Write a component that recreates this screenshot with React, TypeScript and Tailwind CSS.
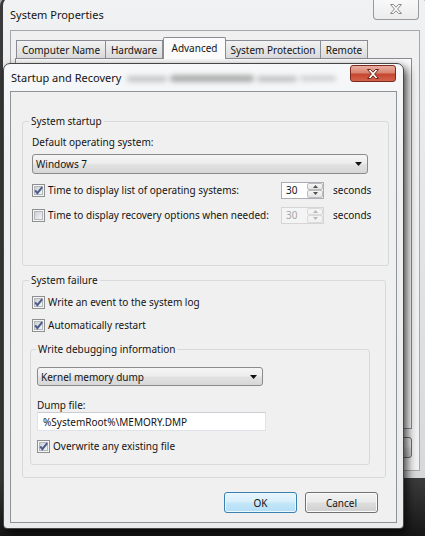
import React from "react";

function XGlyph({ fill, stroke, className }: { fill: string; stroke: string; className: string }) {
  return (
    <svg viewBox="0 0 14 10" className={className}>
      <path
        d="M1.5 0.5H4.5L7 3.2L9.5 0.5H12.5L8.6 5L12.5 9.5H9.5L7 6.8L4.5 9.5H1.5L5.4 5Z"
        fill={fill}
        stroke={stroke}
        strokeWidth="1"
        strokeLinejoin="round"
      />
    </svg>
  );
}

function CheckBox({ checked }: { checked: boolean }) {
  return (
    <span className="relative flex h-[13px] w-[13px] shrink-0 items-center justify-center border border-[#8e8f8f] bg-[#f4f4f4]">
      <span className="h-[9px] w-[9px] border border-[#b3b7bd] bg-[linear-gradient(135deg,#cbcfd5,#f6f6f6)]" />
      {checked && (
        <svg viewBox="0 0 13 13" className="absolute left-[-1px] top-[-1px] h-[13px] w-[13px]">
          <path d="M3.2 6.4L5.4 9.2L10.2 3.2" fill="none" stroke="#4a5d8a" strokeWidth="2" />
        </svg>
      )}
    </span>
  );
}

function Combo({ text, size }: { text: string; size: string }) {
  return (
    <div
      className={`flex items-center justify-between rounded-[3px] border border-[#8b8b8b] bg-[linear-gradient(180deg,#f5f5f5,#ededed_45%,#e1e1e1_55%,#d7d7d7)] pl-[3px] pr-[5px] ${size}`}
    >
      <span>{text}</span>
      <svg viewBox="0 0 7 4" className="h-[4px] w-[7px]">
        <path d="M0 0H7L3.5 4Z" fill="#111" />
      </svg>
    </div>
  );
}

function SpinBtn({ up, disabled }: { up: boolean; disabled: boolean }) {
  return (
    <div
      className={
        disabled
          ? "flex flex-1 items-center justify-center rounded-[2px] border border-[#dadada] bg-[#f3f3f3]"
          : "flex flex-1 items-center justify-center rounded-[2px] border border-[#bdbdbd] bg-[linear-gradient(180deg,#f6f6f6,#e3e3e3)]"
      }
    >
      <svg viewBox="0 0 5 3" className="h-[3px] w-[5px]">
        <path d={up ? "M0 3H5L2.5 0Z" : "M0 0H5L2.5 3Z"} fill={disabled ? "#b8b8b8" : "#505050"} />
      </svg>
    </div>
  );
}

function Spin({ disabled }: { disabled: boolean }) {
  return (
    <div
      className={
        disabled
          ? "flex h-[17px] w-[43px] border border-[#d5d5d5] bg-[#f4f4f4]"
          : "flex h-[17px] w-[43px] border border-[#abadb3] bg-white"
      }
    >
      <span className={disabled ? "flex-1 pl-[4px] leading-[15px] text-[#a6a6a6]" : "flex-1 pl-[4px] leading-[15px]"}>30</span>
      <div className="flex w-[16px] flex-col">
        <SpinBtn up={true} disabled={disabled} />
        <SpinBtn up={false} disabled={disabled} />
      </div>
    </div>
  );
}

function Tab({ label, size, selected }: { label: string; size: string; selected?: boolean }) {
  return (
    <div
      className={
        selected
          ? `relative z-10 mb-[-1px] flex h-[22px] items-start justify-center rounded-t-[2px] border border-b-0 border-[#898c95] bg-[#fbfbfb] pt-[3px] ${size}`
          : `flex h-[18px] items-center justify-center border border-b-0 border-l-0 border-[#898c95] bg-[linear-gradient(180deg,#f2f2f2,#e6e6e6_50%,#dadada)] ${size}`
      }
    >
      {label}
    </div>
  );
}

export default function App() {
  return (
    <div className="relative h-[536px] w-[425px] overflow-hidden bg-[linear-gradient(180deg,#a8a8a8_0%,#8a8a8a_55%,#4a4a4a_85%,#161616_100%)] font-['Noto_Sans',sans-serif] text-[10px] leading-[14px] text-[#141414]">
      {/* Background window: System Properties */}
      <div className="absolute left-0 top-[-3px] flex w-[428px] flex-col rounded-t-[9px] border border-l-[3px] border-[#3a3a3a] bg-[linear-gradient(180deg,#f1f2f3,#e4e6e8_40%,#d6d8da)] pb-[7px] pl-[7px] pr-[7px]">
        <div className="h-[32px] pt-[10px] text-[11px] leading-[14px]">System Properties</div>
        <div className="absolute right-[8px] top-0 flex h-[22px] w-[46px] items-center justify-center rounded-b-[4px] border border-t-0 border-[#9a9a9a] bg-[linear-gradient(180deg,#fafafa,#ececec)]">
          <XGlyph fill="#f7f7f7" stroke="#8c8c8c" className="h-[10px] w-[14px]" />
        </div>
        <div className="flex flex-col border border-[#a7a7a7] bg-[#f0f0f0] pb-[12px] pl-[4px] pr-[7px] pt-[6px]">
          <div className="flex h-[21px] items-end pl-[1px]">
            <div className="h-[18px] w-0 border-l border-[#898c95]" />
            <Tab label="Computer Name" size="w-[89px]" />
            <Tab label="Hardware" size="w-[57px]" />
            <Tab label="Advanced" size="w-[63px]" selected />
            <Tab label="System Protection" size="w-[95px]" />
            <Tab label="Remote" size="w-[47px]" />
          </div>
          <div className="h-[371px] border border-[#898c95] bg-[#fbfbfb]" />
          <div className="mt-[8px] flex justify-end gap-[6px]">
            <button className="h-[21px] w-[75px] rounded-[3px] border border-[#707070] bg-[linear-gradient(180deg,#f2f2f2,#ebebeb_45%,#dddddd_55%,#cfcfcf)]">OK</button>
            <button className="h-[21px] w-[75px] rounded-[3px] border border-[#707070] bg-[linear-gradient(180deg,#f2f2f2,#ebebeb_45%,#dddddd_55%,#cfcfcf)]">Cancel</button>
            <button className="h-[21px] w-[75px] rounded-[3px] border border-[#707070] bg-[linear-gradient(180deg,#f2f2f2,#ebebeb_45%,#dddddd_55%,#cfcfcf)]">Apply</button>
          </div>
        </div>
      </div>

      {/* Foreground dialog: Startup and Recovery */}
      <div className="absolute left-[3px] top-[63px] flex w-[401px] flex-col rounded-b-[4px] rounded-t-[7px] border border-[#474747] bg-[linear-gradient(180deg,#f7f8f9,#eef0f2_20%,#e9ebed)] px-[6px] pb-[5px] shadow-[3px_4px_10px_rgba(0,0,0,0.75)]">
        <div className="flex h-[27px] items-start pl-[1px] pt-[7px]">
          <span className="shrink-0 text-[11px] leading-[14px]">Startup and Recovery</span>
          {/* glass blur of the window behind */}
          <div className="ml-[6px] mt-[3px] flex h-[9px] items-center gap-[3px] blur-[2.5px]">
            <div className="h-[6px] w-[40px] rounded-full bg-[#c6c6c6]" />
            <div className="h-[7px] w-[84px] rounded-full bg-[#acacac]" />
            <div className="h-[6px] w-[40px] rounded-full bg-[#c2c2c2]" />
            <div className="h-[5px] w-[36px] rounded-full bg-[#cdcdcd]" />
          </div>
        </div>
        <div className="absolute right-[7px] top-[1px] flex h-[17px] w-[46px] items-center justify-center rounded-[3px] border border-[#7d2a1e] bg-[linear-gradient(180deg,#eab0a3,#d98570_45%,#c7452f_55%,#d2644c)]">
          <XGlyph fill="#ffffff" stroke="#6d2419" className="h-[10px] w-[14px]" />
        </div>

        <div className="flex flex-col border border-[#8f9296] bg-[#f0f0f0] pb-[9px] pt-[22px]">
          {/* System startup */}
          <fieldset className="ml-[11px] mr-[10px] rounded-[3px] border border-[#d7d9db]">
            <legend className="ml-[6px] h-[14px] px-[2px] leading-[14px]">System startup</legend>
            <div className="flex flex-col pb-[41px] pl-[9px] pr-[17px] pt-[7px]">
              <div className="h-[14px]">Default operating system:</div>
              <Combo text="Windows 7" size="mt-[5px] h-[20px] w-[336px]" />
              <div className="mt-[7px] flex h-[18px] items-center">
                <CheckBox checked={true} />
                <span className="ml-[3px] w-[233px]">Time to display list of operating systems:</span>
                <Spin disabled={false} />
                <span className="ml-[9px]">seconds</span>
              </div>
              <div className="mt-[7px] flex h-[18px] items-center">
                <CheckBox checked={false} />
                <span className="ml-[3px] w-[233px]">Time to display recovery options when needed:</span>
                <Spin disabled={true} />
                <span className="ml-[9px]">seconds</span>
              </div>
            </div>
          </fieldset>

          {/* System failure */}
          <fieldset className="ml-[11px] mr-[10px] mt-[7px] rounded-[3px] border border-[#d7d9db]">
            <legend className="ml-[6px] h-[14px] px-[2px] leading-[14px]">System failure</legend>
            <div className="flex flex-col pb-[12px] pl-[7px] pr-[15px] pt-[7px]">
              <div className="ml-[2px] flex h-[16px] items-center">
                <CheckBox checked={true} />
                <span className="ml-[3px]">Write an event to the system log</span>
              </div>
              <div className="ml-[2px] mt-[7px] flex h-[16px] items-center">
                <CheckBox checked={true} />
                <span className="ml-[3px]">Automatically restart</span>
              </div>

              <fieldset className="mt-[9px] rounded-[3px] border border-[#d7d9db]">
                <legend className="ml-[5px] h-[14px] px-[2px] leading-[14px]">Write debugging information</legend>
                <div className="flex flex-col pb-[10px] pl-[6px] pt-[11px]">
                  <Combo text="Kernel memory dump" size="h-[19px] w-[226px]" />
                  <div className="mt-[12px] h-[14px]">Dump file:</div>
                  <div className="flex h-[19px] w-[229px] items-center border border-[#dfe2e6] border-t-[#c9cdd2] bg-white pl-[5px]">
                    %SystemRoot%\MEMORY.DMP
                  </div>
                  <div className="mt-[7px] flex h-[16px] items-center">
                    <CheckBox checked={true} />
                    <span className="ml-[3px]">Overwrite any existing file</span>
                  </div>
                </div>
              </fieldset>
            </div>
          </fieldset>

          <div className="mt-[14px] flex justify-end gap-[8px] pr-[18px]">
            <button className="h-[21px] w-[73px] rounded-[3px] border border-[#3c7fb1] bg-[linear-gradient(180deg,#e9f6fd,#d7effb_45%,#c3e6f9_55%,#b3def6)] shadow-[inset_0_0_0_1px_#eaf7fe]">
              OK
            </button>
            <button className="h-[21px] w-[73px] rounded-[3px] border border-[#707070] bg-[linear-gradient(180deg,#f2f2f2,#ebebeb_45%,#dddddd_55%,#cfcfcf)] shadow-[inset_0_0_0_1px_#fbfbfb]">
              Cancel
            </button>
          </div>
        </div>
      </div>
    </div>
  );
}
